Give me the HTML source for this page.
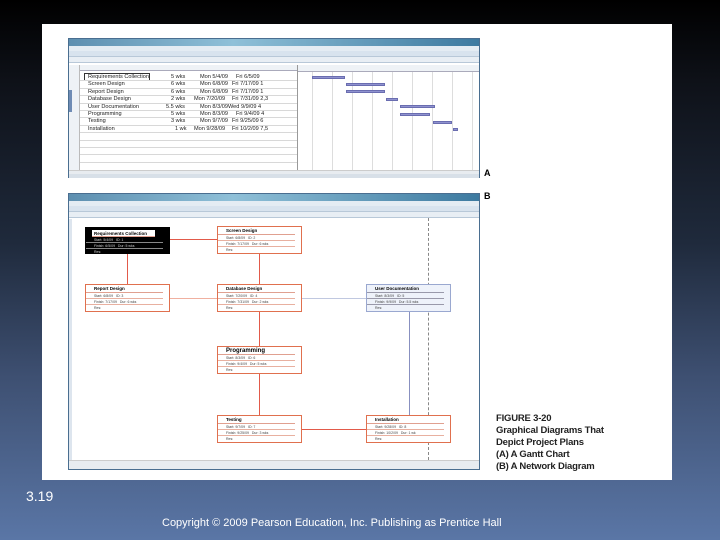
<!DOCTYPE html>
<html><head><meta charset="utf-8"><style>
*{margin:0;padding:0;box-sizing:border-box}
body{width:720px;height:540px;overflow:hidden;position:relative;font-family:"Liberation Sans",sans-serif;background:linear-gradient(180deg,#000 0%,#0e1118 15%,#1f2a3c 45%,#3e5072 70%,#5a76a6 100%)}
.a{position:absolute}
.white{left:42px;top:24px;width:630px;height:456px;background:#fff}
.win{background:#fff;border:1px solid #4a6e90}
.title{background:linear-gradient(90deg,#5d8fb0,#8fc0d8 40%,#3d7aa0);height:7px}
.menu{background:#e4ecf3;height:5px}
.tb{background:#d8e3ee;height:6px;border-bottom:1px solid #b8c8d8}
.t{font-size:5.6px;color:#222;white-space:nowrap;line-height:6.4px;height:7.4px;padding-left:8px}
.row{border-bottom:1px solid #d8d8d8}
.bar{background:#8f92cf;border:1px solid #6a6db0;height:3px}
.box{border:1.2px solid #e0704e;background:#fff}
.box .h{font-size:4.5px;font-weight:bold;padding:1px 0 0 8px;height:8px;border-bottom:1px solid #e0a090;margin:0 6px 0 0}
.box .l{font-size:3.5px;padding-left:8px;height:6px;line-height:6px;color:#444;border-bottom:1px solid #e8b0a0;margin-right:6px}
.rl{background:#e25a4a}
</style></head><body>
<div class="a white"></div>

<div class="a win" style="left:68px;top:38px;width:412px;height:140px">
 <div class="title"></div><div class="menu"></div><div class="tb"></div><div class="tb" style="background:#e8eef4"></div>
</div>
<div class="a" style="left:69px;top:65px;width:229px;height:6px;background:#eef2f6;border-bottom:1px solid #aab"></div>
<div class="a" style="left:298px;top:65px;width:181px;height:7px;background:#eef2f6;border-bottom:1px solid #aab"></div>
<div class="a" style="left:69px;top:65px;width:11px;height:105px;background:#eef2f6;border-right:1px solid #bbb"></div>
<div class="a" style="left:69px;top:90px;width:3px;height:22px;background:#6f8cb5"></div>
<div class="a" style="left:297px;top:65px;width:1px;height:105px;background:#999"></div>
<div class="a" style="left:69px;top:170px;width:410px;height:4px;background:#e8ecf0;border-top:1px solid #ccc"></div>
<div class="a" style="left:69px;top:174px;width:410px;height:4px;background:#d8e0e8"></div>
<div class="a" style="left:84px;top:73px;width:66px;height:8px;border:1px solid #333"></div>
<div class="a" style="left:80px;top:74px">
 <div class="t row" style="width:217px;position:relative">Requirements Collection<span class="a" style="left:91px">5 wks</span><span class="a" style="left:120px">Mon 5/4/09</span><span class="a" style="left:156px">Fri 6/5/09</span></div>
 <div class="t row" style="width:217px;position:relative">Screen Design<span class="a" style="left:91px">6 wks</span><span class="a" style="left:120px">Mon 6/8/09</span><span class="a" style="left:152px">Fri 7/17/09 1</span></div>
 <div class="t row" style="width:217px;position:relative">Report Design<span class="a" style="left:91px">6 wks</span><span class="a" style="left:120px">Mon 6/8/09</span><span class="a" style="left:152px">Fri 7/17/09 1</span></div>
 <div class="t row" style="width:217px;position:relative">Database Design<span class="a" style="left:91px">2 wks</span><span class="a" style="left:114px">Mon 7/20/09</span><span class="a" style="left:152px">Fri 7/31/09 2,3</span></div>
 <div class="t row" style="width:217px;position:relative">User Documentation<span class="a" style="left:86px">5.5 wks</span><span class="a" style="left:120px">Mon 8/3/09</span><span class="a" style="left:148px">Wed 9/9/09 4</span></div>
 <div class="t row" style="width:217px;position:relative">Programming<span class="a" style="left:91px">5 wks</span><span class="a" style="left:120px">Mon 8/3/09</span><span class="a" style="left:156px">Fri 9/4/09 4</span></div>
 <div class="t row" style="width:217px;position:relative">Testing<span class="a" style="left:91px">3 wks</span><span class="a" style="left:120px">Mon 9/7/09</span><span class="a" style="left:152px">Fri 9/25/09 6</span></div>
 <div class="t row" style="width:217px;position:relative">Installation<span class="a" style="left:95px">1 wk</span><span class="a" style="left:114px">Mon 9/28/09</span><span class="a" style="left:152px">Fri 10/2/09 7,5</span></div>
 <div class="row" style="height:7.4px;width:217px"></div><div class="row" style="height:7.4px;width:217px"></div><div class="row" style="height:7.4px;width:217px"></div><div class="row" style="height:7.4px;width:217px"></div>
</div>
<div class="a" style="left:312px;top:72px;width:1px;height:98px;background:#ddd;box-shadow:20px 0 #ddd,40px 0 #ddd,60px 0 #ddd,80px 0 #ddd,100px 0 #ddd,120px 0 #ddd,140px 0 #ddd,160px 0 #ddd"></div>
<div class="a bar" style="left:312px;top:76px;width:33px"></div>
<div class="a bar" style="left:346px;top:83px;width:39px"></div>
<div class="a bar" style="left:346px;top:90px;width:39px"></div>
<div class="a bar" style="left:386px;top:98px;width:12px"></div>
<div class="a bar" style="left:400px;top:105px;width:35px"></div>
<div class="a bar" style="left:400px;top:113px;width:30px"></div>
<div class="a bar" style="left:433px;top:121px;width:19px"></div>
<div class="a bar" style="left:453px;top:128px;width:5px"></div>
<div class="a" style="left:484px;top:168px;font-size:9px;font-weight:bold">A</div>
<div class="a" style="left:484px;top:191px;font-size:9px;font-weight:bold">B</div>

<div class="a win" style="left:68px;top:193px;width:412px;height:277px">
 <div class="title"></div><div class="menu"></div><div class="tb"></div><div class="tb" style="background:#e8eef4"></div>
</div>
<div class="a" style="left:69px;top:219px;width:3px;height:246px;background:#dde5ee"></div>
<div class="a" style="left:69px;top:460px;width:410px;height:9px;background:#e8ecf0;border-top:1px solid #ccc"></div>
<div class="a" style="left:428px;top:218px;width:0;height:242px;border-left:1px dashed #888"></div>
<div class="a rl" style="left:170px;top:239px;width:47px;height:1px"></div>
<div class="a rl" style="left:127px;top:254px;width:1px;height:30px"></div>
<div class="a rl" style="left:259px;top:254px;width:1px;height:30px"></div>
<div class="a" style="left:170px;top:298px;width:47px;height:1px;background:#f0b0a0"></div>
<div class="a" style="left:302px;top:298px;width:64px;height:1px;background:#c0c8e0"></div>
<div class="a rl" style="left:259px;top:312px;width:1px;height:34px"></div>
<div class="a rl" style="left:259px;top:374px;width:1px;height:41px"></div>
<div class="a" style="left:409px;top:312px;width:1px;height:103px;background:#8890c0"></div>
<div class="a rl" style="left:302px;top:429px;width:64px;height:1px"></div>
<div class="a box" style="left:85px;top:227px;width:85px;height:27px;background:#000;border-color:#000">
 <div class="h" style="color:#000;background:#fff;margin:2px 14px 0 6px;padding-left:2px;height:7px">Requirements Collection</div>
 <div class="l" style="color:#ccc;border-color:#888">Start: 5/4/09 &nbsp; ID: 1</div>
 <div class="l" style="color:#ccc;border-color:#888">Finish: 6/5/09 &nbsp; Dur: 5 wks</div>
 <div class="l" style="color:#ccc;border:0">Res:</div>
</div>
<div class="a box" style="left:217px;top:226px;width:85px;height:28px"><div class="h">Screen Design</div><div class="l">Start: 6/8/09 &nbsp; ID: 2</div><div class="l">Finish: 7/17/09 &nbsp; Dur: 6 wks</div><div class="l" style="border:0">Res:</div></div>
<div class="a box" style="left:85px;top:284px;width:85px;height:28px"><div class="h">Report Design</div><div class="l">Start: 6/8/09 &nbsp; ID: 3</div><div class="l">Finish: 7/17/09 &nbsp; Dur: 6 wks</div><div class="l" style="border:0">Res:</div></div>
<div class="a box" style="left:217px;top:284px;width:85px;height:28px"><div class="h">Database Design</div><div class="l">Start: 7/20/09 &nbsp; ID: 4</div><div class="l">Finish: 7/31/09 &nbsp; Dur: 2 wks</div><div class="l" style="border:0">Res:</div></div>
<div class="a box" style="left:366px;top:284px;width:85px;height:28px;background:#eef2fa;border-color:#9aa8d0"><div class="h" style="border-color:#99a">User Documentation</div><div class="l" style="border-color:#99a">Start: 8/3/09 &nbsp; ID: 5</div><div class="l" style="border-color:#99a">Finish: 9/9/09 &nbsp; Dur: 5.5 wks</div><div class="l" style="border:0">Res:</div></div>
<div class="a box" style="left:217px;top:346px;width:85px;height:28px"><div class="h" style="font-size:6px">Programming</div><div class="l">Start: 8/3/09 &nbsp; ID: 6</div><div class="l">Finish: 9/4/09 &nbsp; Dur: 5 wks</div><div class="l" style="border:0">Res:</div></div>
<div class="a box" style="left:217px;top:415px;width:85px;height:28px"><div class="h">Testing</div><div class="l">Start: 9/7/09 &nbsp; ID: 7</div><div class="l">Finish: 9/25/09 &nbsp; Dur: 3 wks</div><div class="l" style="border:0">Res:</div></div>
<div class="a box" style="left:366px;top:415px;width:85px;height:28px"><div class="h">Installation</div><div class="l">Start: 9/28/09 &nbsp; ID: 8</div><div class="l">Finish: 10/2/09 &nbsp; Dur: 1 wk</div><div class="l" style="border:0">Res:</div></div>

<div class="a" style="left:496px;top:413px;font-size:9.5px;font-weight:bold;line-height:12px;color:#222;letter-spacing:-0.2px">FIGURE 3-20<br>Graphical Diagrams That<br>Depict Project Plans<br>(A) A Gantt Chart<br>(B) A Network Diagram</div>

<div class="a" style="left:26px;top:488px;font-size:14px;color:#fff">3.19</div>
<div class="a" style="left:162px;top:517px;font-size:11px;color:#fff">Copyright © 2009 Pearson Education, Inc. Publishing as Prentice Hall</div>
</body></html>
